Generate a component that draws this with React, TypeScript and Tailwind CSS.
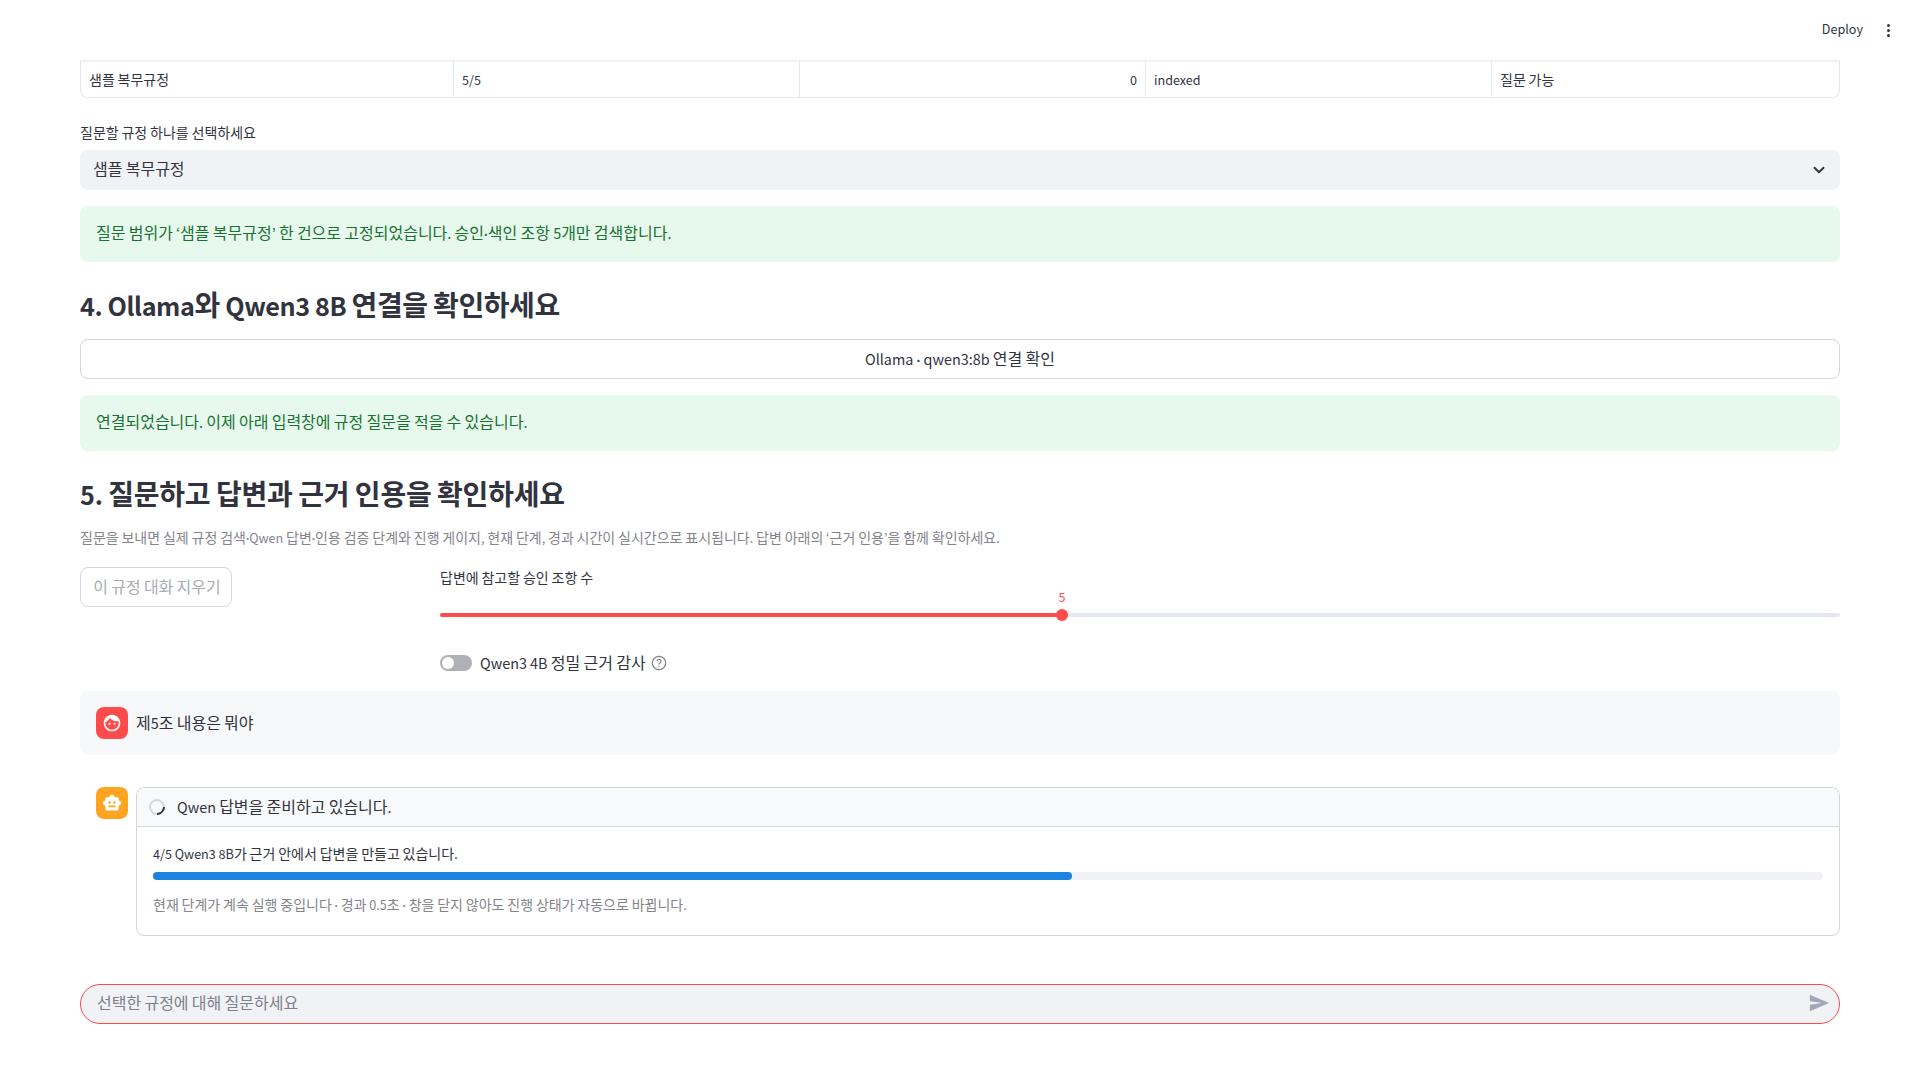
import React from 'react';
import { ChevronDown } from 'lucide-react';

// Latin runs in the CJK font are wider than the picture's, so they are set a bit smaller.
// The middle dot of the CJK font is far too wide, Lato's is close.
function T({ children }: { children: string }) {
  const parts = children.split(/([^\uac00-\ud7a3]+)/);
  return (
    <span>
      {parts.map((p, i) =>
        i % 2 ? (
          <span key={i} className="text-[0.9em]">
            {p.split(/(·)/).map((q, j) =>
              q === '·' ? <span key={j} className="font-['Lato']">{q}</span> : q
            )}
          </span>
        ) : (
          p
        )
      )}
    </span>
  );
}

const cells = [
  { text: '샘플 복무규정', cls: 'w-[373px]' },
  { text: '5/5', cls: 'w-[346px]' },
  { text: '0', cls: 'w-[346px] justify-end' },
  { text: 'indexed', cls: 'w-[346px]' },
  { text: '질문 가능', cls: 'flex-1' },
];

function UserAvatar() {
  return (
    <div className="w-8 h-8 rounded-lg bg-[#ff4b4b] flex items-center justify-center shrink-0">
      <svg viewBox="0 0 24 24" className="w-5 h-5" fill="white">
        <path d="M9 11.75c-.69 0-1.250.56-1.250 1.250s.56 1.250 1.250 1.250 1.250-.56 1.250-1.250-.56-1.250-1.250-1.250zm6 0c-.69 0-1.250.56-1.250 1.250s.56 1.250 1.250 1.250 1.250-.56 1.250-1.250-.56-1.250-1.250-1.250zM12 2C6.480 2 2 6.480 2 12s4.480 10 10 10 10-4.480 10-10S17.520 2 12 2zm0 18c-4.410 0-8-3.590-8-8 0-.29.02-.58.05-.86 2.360-1.050 4.230-2.980 5.210-5.370C11.070 8.330 14.050 10 17.420 10c.78 0 1.530-.09 2.250-.26.21.71.33 1.470.33 2.260 0 4.410-3.590 8-8 8z" />
      </svg>
    </div>
  );
}

function BotAvatar() {
  return (
    <div className="w-8 h-8 rounded-lg bg-[#ffa421] flex items-center justify-center shrink-0">
      <svg viewBox="0 0 24 24" className="w-5 h-5" fill="white">
        <path d="M20 9V7c0-1.100-.9-2-2-2h-3c0-1.660-1.340-3-3-3S9 3.340 9 5H6c-1.100 0-2 .9-2 2v2c-1.660 0-3 1.340-3 3s1.340 3 3 3v4c0 1.100.9 2 2 2h12c1.100 0 2-.9 2-2v-4c1.660 0 3-1.340 3-3s-1.340-3-3-3zM7.500 11.500c0-.83.67-1.500 1.500-1.500s1.500.67 1.500 1.500S9.830 13 9 13s-1.500-.67-1.500-1.500zM16 17H8v-2h8v2zm-1-4c-.83 0-1.500-.67-1.500-1.500S14.170 10 15 10s1.500.67 1.500 1.500S15.830 13 15 13z" />
      </svg>
    </div>
  );
}

function App() {
  return (
    <div className="min-h-screen bg-white text-[#31333f] font-['Noto_Sans_CJK_KR',sans-serif] overflow-hidden">
      {/* Top bar */}
      <header className="h-[60px] flex items-center justify-end pr-[30px] gap-[24px]">
        <span className="text-sm pb-[4px]"><T>Deploy</T></span>
        <div className="flex flex-col gap-[2px]">
          <span className="w-[3px] h-[3px] rounded-full bg-[#31333f]" />
          <span className="w-[3px] h-[3px] rounded-full bg-[#31333f]" />
          <span className="w-[3px] h-[3px] rounded-full bg-[#31333f]" />
        </div>
      </header>

      <main className="px-[80px]">
        {/* Table, scrolled under the top bar */}
        <div className="border-x border-b border-[#e6e7ea] rounded-b-lg">
          <div className="h-[2px] bg-[#f0f1f4]" />
          <div className="flex h-[35px] text-[14px]">
            {cells.map((c, i) => (
              <div key={i} className={`${c.cls} px-2 flex items-center ${i < 4 ? 'border-r border-[#e6e7ea]' : ''}`}>
                <T>{c.text}</T>
              </div>
            ))}
          </div>
        </div>

        <div className="mt-[24px] h-[20px] flex items-center text-[14px]"><T>질문할 규정 하나를 선택하세요</T></div>
        <div className="mt-[8px] h-[40px] rounded-lg bg-[#f0f2f6] flex items-center justify-between pl-[13px] pr-[12px] text-base">
          <span className="pb-[4px]"><T>샘플 복무규정</T></span>
          <ChevronDown className="w-[18px] h-[18px]" strokeWidth={2.500} />
        </div>

        <div className="mt-[16px] h-[56px] rounded-lg bg-[#e7f8ec] text-[#177233] flex items-center px-4 pb-[3px] text-base">
          <T>질문 범위가 ‘샘플 복무규정’ 한 건으로 고정되었습니다. 승인·색인 조항 5개만 검색합니다.</T>
        </div>

        <h3 className="mt-[23px] h-[40px] flex items-center text-[28px] font-semibold tracking-[-0.4px] pb-[2px]">
          <T>4. Ollama와 Qwen3 8B 연결을 확인하세요</T>
        </h3>

        <button className="mt-[14px] w-full h-[40px] rounded-lg border border-[#d5d6db] bg-white text-base flex items-center justify-center pb-[2px]">
          <T>Ollama · qwen3:8b 연결 확인</T>
        </button>

        <div className="mt-[16px] h-[56px] rounded-lg bg-[#e7f8ec] text-[#177233] flex items-center px-4 pb-[4px] text-base">
          <T>연결되었습니다. 이제 아래 입력창에 규정 질문을 적을 수 있습니다.</T>
        </div>

        <h3 className="mt-[23px] h-[40px] flex items-center text-[28px] font-semibold tracking-[-0.2px] pb-[2px]">
          <T>5. 질문하고 답변과 근거 인용을 확인하세요</T>
        </h3>

        <p className="mt-[14px] h-[20px] flex items-center text-[14px] text-[#83848c]">
          <T>질문을 보내면 실제 규정 검색·Qwen 답변·인용 검증 단계와 진행 게이지, 현재 단계, 경과 시간이 실시간으로 표시됩니다. 답변 아래의 ‘근거 인용’을 함께 확인하세요.</T>
        </p>

        <div className="mt-[19px] grid grid-cols-[344px_1fr] gap-x-4">
          <div>
            <button className="w-[152px] h-[40px] rounded-lg border border-[#d5d6db] text-base text-[#a9abb3] flex items-center justify-center pb-[2px] pl-[2px]">
              <T>이 규정 대화 지우기</T>
            </button>
          </div>
          <div>
            <div className="h-[20px] flex items-center text-[14px]"><T>답변에 참고할 승인 조항 수</T></div>
            <div className="mt-[22px] h-3 relative flex items-center">
              <div className="w-full h-1 rounded-full bg-[#e6e8ef]">
                <div className="w-[622px] h-1 rounded-full bg-[#ff4b4b]" />
              </div>
              <div className="absolute left-[616px] top-0 w-3 h-3 rounded-full bg-[#ff4b4b]" />
              <span className="absolute left-[622px] -translate-x-1/2 -top-[23px] text-[14px] text-[#ff4b4b]"><T>5</T></span>
            </div>
            <div className="mt-[34px] h-4 flex items-center text-base">
              <div className="w-8 h-4 rounded-full bg-[#b0b1b6] flex items-center pl-[2px]">
                <div className="w-3 h-3 rounded-full bg-white" />
              </div>
              <span className="ml-2 pb-[3px]"><T>Qwen3 4B 정밀 근거 감사</T></span>
              <svg viewBox="0 0 24 24" className="w-4 h-4 ml-[5px] text-[#83848c]" fill="none" stroke="currentColor" strokeWidth="1.800">
                <circle cx="12" cy="12" r="10" />
                <path d="M9 9.500a3 3 0 1 1 4.500 2.600c-1 .6-1.500 1.200-1.500 2.400" />
                <circle cx="12" cy="17.500" r="1" fill="currentColor" stroke="none" />
              </svg>
            </div>
          </div>
        </div>

        <div className="mt-[20px] h-[64px] rounded-lg bg-[#f7f8fa] flex items-center px-4 gap-2 text-base">
          <UserAvatar />
          <span className="pb-[3px]"><T>제5조 내용은 뭐야</T></span>
        </div>

        <div className="mt-[32px] flex pl-4 gap-2">
          <BotAvatar />
          <div className="flex-1 rounded-lg border border-[#d5d6db] overflow-hidden">
            <div className="h-[39px] bg-[#f8f9fb] border-b border-[#d5d6db] flex items-center pl-3 gap-[12px] text-base">
              <div className="w-4 h-4 rounded-full border-[2.5px] border-[#d5d6db] border-b-[#31333f] -rotate-45" />
              <span className="pb-[2px]"><T>Qwen 답변을 준비하고 있습니다.</T></span>
            </div>
            <div className="px-4 pt-[17px] pb-[18px]">
              <div className="h-[20px] flex items-center text-[14px] pb-[1px]"><T>4/5 Qwen3 8B가 근거 안에서 답변을 만들고 있습니다.</T></div>
              <div className="mt-2 h-2 rounded-full bg-[#f0f2f6]">
                <div className="w-[55%] h-2 rounded-full bg-[#1c83e1]" />
              </div>
              <div className="mt-[17px] h-[20px] flex items-center text-[14px] text-[#83848c] pb-[4px]">
                <T>현재 단계가 계속 실행 중입니다 · 경과 0.5초 · 창을 닫지 않아도 진행 상태가 자동으로 바뀝니다.</T>
              </div>
            </div>
          </div>
        </div>

        <div className="mt-[48px] h-[40px] rounded-[20px] border border-[#ff4b4b] bg-[#f0f2f6] flex items-center justify-between pl-4 pr-[9px] text-base">
          <span className="text-[#7d7f8a] pb-[5px]"><T>선택한 규정에 대해 질문하세요</T></span>
          <svg viewBox="0 0 24 24" className="w-[22px] h-[22px] -translate-y-[1px]" fill="#a3a8b8">
            <path d="M2 21l21-9L2 3v7l13 2-13 2z" />
          </svg>
        </div>
      </main>
    </div>
  );
}

export default App;
